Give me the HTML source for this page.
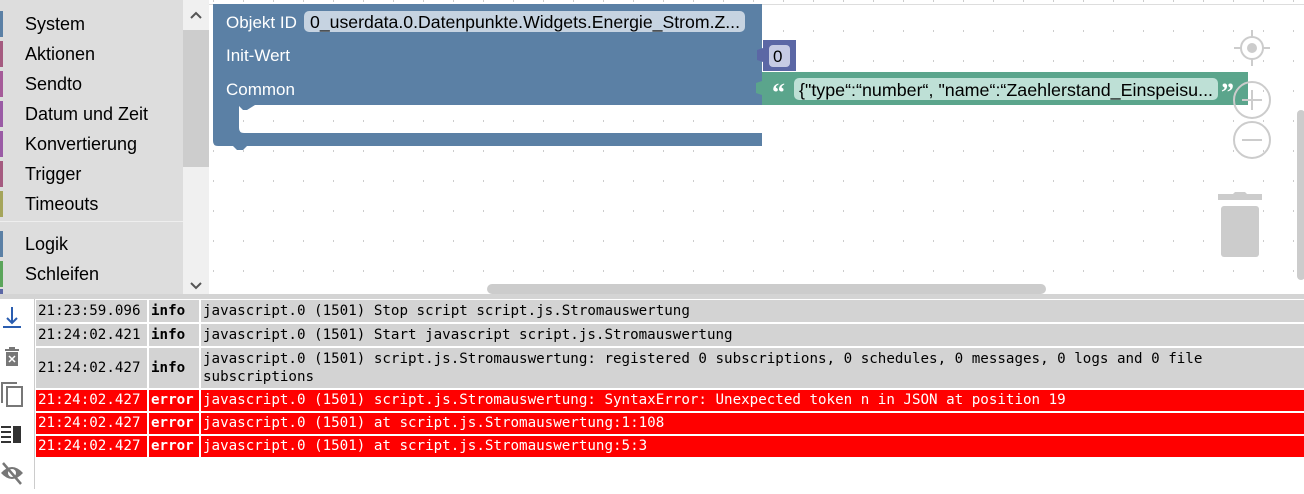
<!DOCTYPE html>
<html><head><meta charset="utf-8"><style>
*{margin:0;padding:0;box-sizing:border-box}
body{width:1304px;height:489px;overflow:hidden;background:#fff;position:relative;font-family:"Liberation Sans",Arial,sans-serif}
#tb{position:absolute;left:0;top:0;width:183px;height:295px;background:#ddd}
.cat{position:absolute;left:0;height:26px;width:183px;font-size:18px;color:#000;line-height:26px;padding-left:25px}
.cat i{position:absolute;left:0;top:0;width:3px;height:26px}
#sb{position:absolute;left:183px;top:0;width:26px;height:295px;background:#f0f0f0}
#sep{position:absolute;left:0;top:294px;width:1304px;height:5px;background:#d4d4d4}
#log{position:absolute;left:0;top:299px;width:1304px;height:190px}
#lt{position:absolute;left:0;top:0;width:35px;height:190px;background:#fff;border-right:1px solid #ccc}
table{position:absolute;left:34px;top:-1px;border-collapse:separate;border-spacing:2px;width:1272px;font-family:"DejaVu Sans Mono","Liberation Mono",monospace;font-size:14.2px}
td{padding:2px 2px;vertical-align:middle;line-height:18px}
tr.i td{background:#d3d3d3;color:#000}
tr.e td{background:#f00;color:#fff;padding:1px 2px 2px}
td.l{font-weight:bold}
</style></head><body>
<svg style="position:absolute;left:0;top:0" width="1304" height="300">
<defs><pattern id="g" x="3" y="0" width="30" height="30" patternUnits="userSpaceOnUse"><rect x="-1" y="0" width="2" height="2" fill="#ccc"/></pattern></defs>
<rect x="209" y="0" width="1095" height="295" fill="url(#g)"/>
<line x1="209" y1="4.5" x2="1304" y2="4.5" stroke="#ddd"/>
<path d="M213 4 H762 V105 H255 l-8 5 h-4 l-4 -4 V128 q0 5 5 5 H762 V146 H247 l-4 4 h-6 l-4 -4 H218 q-5 0 -5 -5 Z" fill="#5b80a5"/>
<rect x="304" y="11" width="441" height="21" rx="5" fill="#c6d3e1"/>
<text x="310" y="28" font-size="17.6" fill="#000" font-family="Liberation Sans" textLength="430" lengthAdjust="spacingAndGlyphs">0_userdata.0.Datenpunkte.Widgets.Energie_Strom.Z...</text>
<text x="226" y="28" font-size="17" fill="#fff" font-family="Liberation Sans">Objekt ID</text>
<text x="226" y="61" font-size="17" fill="#fff" font-family="Liberation Sans">Init-Wert</text>
<text x="226" y="95" font-size="17" fill="#fff" font-family="Liberation Sans">Common</text>
<path d="M763 40 H796 V71 H763 V62 l-6 -2 v-10 l6 -2 Z" fill="#5b67a5"/>
<rect x="769" y="45" width="21" height="22" rx="4" fill="#c6cbe4"/>
<text x="773" y="62" font-size="17" fill="#000">0</text>
<path d="M762 72 H1248 V105 H762 V95 l-6 -2 v-10 l6 -2 Z" fill="#5ba58c"/>
<text x="772" y="101" font-size="26" font-weight="bold" fill="#fff" font-family="Liberation Serif">“</text>
<rect x="794" y="78" width="424" height="22" rx="5" fill="#bee0d6"/>
<text x="799" y="96" font-size="17.6" fill="#000" textLength="414" lengthAdjust="spacingAndGlyphs">{"type“:“number“, "name“:“Zaehlerstand_Einspeisu...</text>
<text x="1221" y="101" font-size="26" font-weight="bold" fill="#fff" font-family="Liberation Serif">”</text>
<g fill="none" stroke="#ccc" stroke-width="2">
<circle cx="1252" cy="48" r="11"/><path d="M1252 30v7M1252 59v7M1234 48h7M1263 48h7"/>
<circle cx="1252" cy="100" r="18"/><path d="M1242 100h20M1252 90v20"/>
<circle cx="1252" cy="140" r="18"/><path d="M1242 140h20"/>
</g>
<circle cx="1252" cy="48" r="5" fill="#ccc"/>
<path d="M1218 200h44v-6h-15l-2-2h-10l-2 2h-15z" fill="#ccc"/>
<rect x="1221" y="206" width="38" height="51" rx="3" fill="#ccc"/>
<rect x="1297" y="110" width="8" height="170" rx="4" fill="#ccc"/>
<rect x="487" y="284" width="559" height="10" rx="5" fill="#ccc"/>
</svg>
<div id="tb">
<div class="cat" style="top:11px"><i style="background:#5b80a5"></i>System</div>
<div class="cat" style="top:41px"><i style="background:#a55b80"></i>Aktionen</div>
<div class="cat" style="top:71px"><i style="background:#a55b99"></i>Sendto</div>
<div class="cat" style="top:101px"><i style="background:#9a5ba5"></i>Datum und Zeit</div>
<div class="cat" style="top:131px"><i style="background:#9a5ba5"></i>Konvertierung</div>
<div class="cat" style="top:161px"><i style="background:#a55b80"></i>Trigger</div>
<div class="cat" style="top:191px"><i style="background:#a5a55b"></i>Timeouts</div>
<div style="position:absolute;left:0;top:221px;width:183px;height:1px;background:#eee"></div>
<div class="cat" style="top:231px"><i style="background:#5b80a5"></i>Logik</div>
<div class="cat" style="top:261px"><i style="background:#5ba55b"></i>Schleifen</div>
<div style="position:absolute;left:0;top:289px;width:3px;height:5px;background:#5b67a5"></div>
</div>
<div id="sb"><div style="position:absolute;left:0;top:30px;width:26px;height:137px;background:#cdcdcd"></div>
<svg width="26" height="295" style="position:absolute;left:0;top:0"><path d="M8 18l5-5 5 5M8 283l5 5 5-5" fill="none" stroke="#555" stroke-width="2"/></svg></div>
<div id="sep"></div>
<div id="log">
<div id="lt">
<svg width="34" height="190">
<path d="M12 8v16M7 19l5 5 5-5" stroke="#2a5db0" stroke-width="2" fill="none"/><rect x="3" y="27" width="18" height="2" fill="#2a5db0"/>
<path d="M5 51h14M9 49h6" stroke="#777" stroke-width="2"/><rect x="6" y="53" width="12" height="14" fill="#777"/><path d="M9 57l6 6M15 57l-6 6" stroke="#fff" stroke-width="1.5"/>
<rect x="7" y="88" width="15" height="19" fill="none" stroke="#777" stroke-width="2"/><path d="M2 104V84h15" fill="none" stroke="#777" stroke-width="2"/>
<path d="M1 128h10M1 133h10M1 138h10M1 143h10" stroke="#333" stroke-width="2"/><rect x="13" y="127" width="8" height="17" fill="#333"/>
<path d="M1 174q11-12 22 0q-11 12-22 0z" fill="#777"/><circle cx="12" cy="174" r="4" fill="#fff"/><path d="M3 164l18 21" stroke="#777" stroke-width="2.5"/>
</svg>
</div>
<table>
<tr class="i"><td style="width:111px">21:23:59.096</td><td class="l" style="width:50px">info</td><td>javascript.0 (1501) Stop script script.js.Stromauswertung</td></tr>
<tr class="i"><td>21:24:02.421</td><td class="l">info</td><td>javascript.0 (1501) Start javascript script.js.Stromauswertung</td></tr>
<tr class="i"><td>21:24:02.427</td><td class="l">info</td><td>javascript.0 (1501) script.js.Stromauswertung: registered 0 subscriptions, 0 schedules, 0 messages, 0 logs and 0 file subscriptions</td></tr>
<tr class="e"><td>21:24:02.427</td><td class="l">error</td><td>javascript.0 (1501) script.js.Stromauswertung: SyntaxError: Unexpected token n in JSON at position 19</td></tr>
<tr class="e"><td>21:24:02.427</td><td class="l">error</td><td>javascript.0 (1501) at script.js.Stromauswertung:1:108</td></tr>
<tr class="e"><td>21:24:02.427</td><td class="l">error</td><td>javascript.0 (1501) at script.js.Stromauswertung:5:3</td></tr>
</table>
</div>
</body></html>
